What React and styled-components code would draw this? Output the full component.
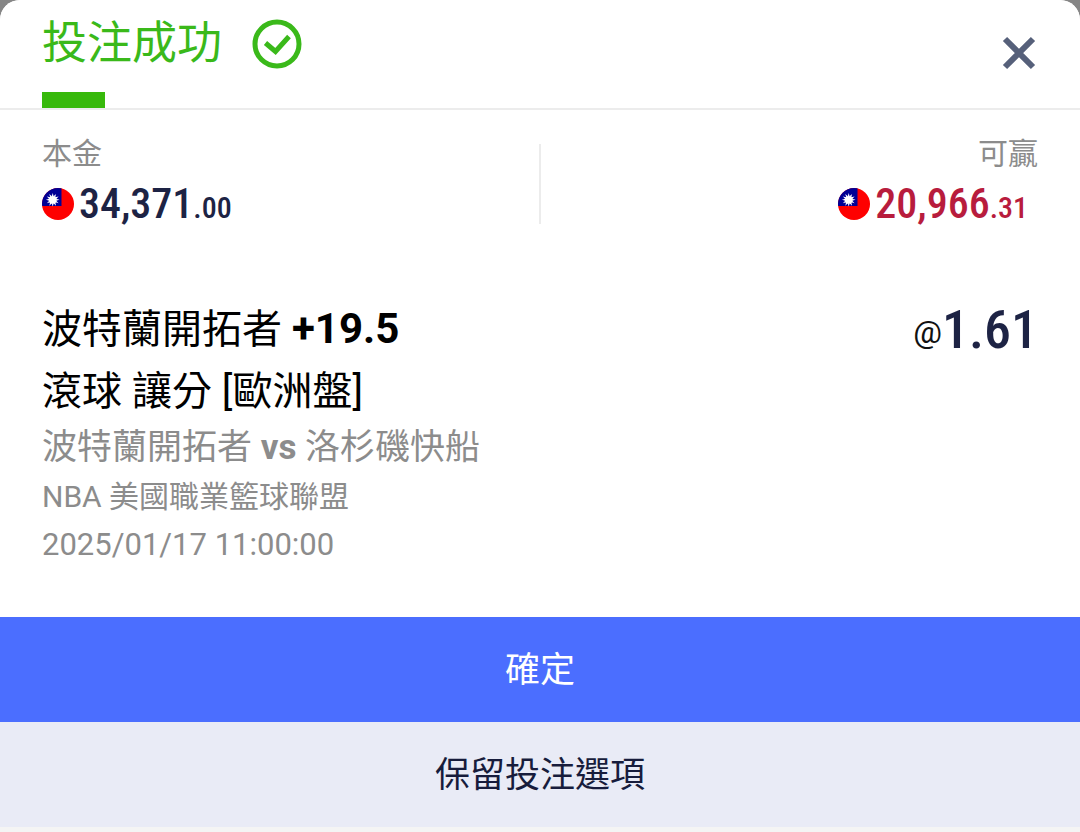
import React from 'react';
import styled, { createGlobalStyle } from 'styled-components';

const GlobalStyle = createGlobalStyle`
  * {
    box-sizing: border-box;
  }

  body {
    margin: 0;
    background: #868686;
    font-family: Roboto, 'Noto Sans CJK TC', sans-serif;
  }
`;

const Sheet = styled.main`
  display: flex;
  flex-direction: column;
  min-height: 100vh;
  overflow: hidden;
  border-radius: 20px 20px 0 0;
  background: #f4f4f4;
`;

const Header = styled.header`
  display: flex;
  justify-content: space-between;
  align-items: flex-start;
  padding: 0 42px;
  border-bottom: 2px solid #ececec;
  background: #fff;
`;

const Title = styled.h1`
  display: flex;
  align-items: center;
  gap: 30px;
  margin: 0;
  padding-bottom: 4px;
  color: #3ab91a;
  font-size: 45px;
  font-weight: 400;
  line-height: 88px;
`;

const ActiveBar = styled.div`
  width: 63px;
  height: 16px;
  background: #37b90b;
`;

const CloseButton = styled.button`
  display: flex;
  margin-top: 34px;
  padding: 0;
  border: 0;
  background: none;
  color: #56607a;
  cursor: pointer;
`;

const Content = styled.section`
  flex: 1;
  padding: 26px 42px 46px;
  background: #fff;
`;

const Summary = styled.div`
  display: flex;
  justify-content: space-between;
  margin-bottom: 62px;
`;

const SummaryItem = styled.div`
  display: flex;
  flex: 1;
  flex-direction: column;
  align-items: ${({ $end }) => ($end ? 'flex-end' : 'flex-start')};
`;

const Divider = styled.div`
  width: 2px;
  margin: 8px 0 12px;
  background: #ececec;
`;

const Label = styled.span`
  color: #8c8c8c;
  font-size: 30px;
  line-height: 36px;
`;

const Amount = styled.strong`
  display: flex;
  align-items: center;
  gap: 5px;
  padding: ${({ $win }) => ($win ? '4px 10px 0 0' : '4px 0 0')};
  color: ${({ $win }) => ($win ? '#b81c3d' : '#1d2344')};
  font-family: 'Roboto Condensed', Roboto, sans-serif;
  font-size: 42px;
  font-weight: 500;
  line-height: 56px;

  svg {
    margin-bottom: 4px;
  }
`;

const Cents = styled.span`
  font-size: 30px;
`;

const Bet = styled.div`
  display: flex;
  justify-content: space-between;
  align-items: flex-start;
`;

const Selection = styled.p`
  margin: 0;
  color: #000;
  font-size: 40px;
  line-height: 62px;

  b {
    font-size: 42px;
  }
`;

const Match = styled.p`
  margin: 0;
  color: #8c8c8c;
  font-size: 35px;
  line-height: 50px;
`;

const Meta = styled.p`
  margin: 0;
  color: #8c8c8c;
  font-size: ${({ $size }) => $size}px;
  line-height: 48px;
`;

const Odds = styled.div`
  color: #1d2344;
  font-family: 'Roboto Condensed', Roboto, sans-serif;
  font-size: 54px;
  font-weight: 500;
  line-height: 64px;
`;

const At = styled.span`
  color: #111;
  font-family: Roboto, sans-serif;
  font-size: 32px;
  font-weight: 400;
  line-height: 1;
  vertical-align: 5px;
`;

const Action = styled.button`
  height: 105px;
  padding: 0 0 6px;
  border: 0;
  background: ${({ $primary }) => ($primary ? '#4b6eff' : '#e9ebf6')};
  color: ${({ $primary }) => ($primary ? '#fff' : '#171c3c')};
  font-family: inherit;
  font-size: 35px;
  cursor: pointer;

  &:last-child {
    margin-bottom: 5px;
  }
`;

const rays = Array.from({ length: 12 }, (_, i) => i * 30);

const Flag = ({ id }) => (
  <svg width="32" height="32" viewBox="0 0 32 32" aria-hidden="true">
    <clipPath id={id}>
      <circle cx="16" cy="16" r="16" />
    </clipPath>
    <g clipPath={`url(#${id})`}>
      <rect width="32" height="32" fill="#fe0000" />
      <rect width="19.5" height="18" fill="#000095" />
      <g fill="#fff" transform="translate(10.7 11.8)">
        {rays.map(angle => (
          <path
            key={angle}
            d="M-1 -3.4L0 -6.8L1 -3.4Z"
            transform={`rotate(${angle})`}
          />
        ))}
        <circle r="3.9" />
      </g>
    </g>
  </svg>
);

const SuccessIcon = () => (
  <svg width="50" height="50" viewBox="0 0 50 50" fill="none" aria-hidden="true">
    <circle cx="25" cy="25" r="22" stroke="currentColor" strokeWidth="5" />
    <path d="M13.5 24L23.5 32.5L37 17.5" stroke="currentColor" strokeWidth="5" />
  </svg>
);

const CloseIcon = () => (
  <svg width="38" height="38" viewBox="0 0 38 38" fill="none" aria-hidden="true">
    <path
      d="M5 5L33 33M33 5L5 33"
      stroke="currentColor"
      strokeWidth="6"
    />
  </svg>
);

const App = () => (
  <>
    <GlobalStyle />
    <Sheet lang="zh-Hant">
      <Header>
        <div>
          <Title>
            投注成功
            <SuccessIcon />
          </Title>
          <ActiveBar />
        </div>
        <CloseButton type="button" aria-label="關閉">
          <CloseIcon />
        </CloseButton>
      </Header>
      <Content>
        <Summary>
          <SummaryItem>
            <Label>本金</Label>
            <Amount>
              <Flag id="stake-flag" />
              <span>
                34,371<Cents>.00</Cents>
              </span>
            </Amount>
          </SummaryItem>
          <Divider />
          <SummaryItem $end>
            <Label>可贏</Label>
            <Amount $win>
              <Flag id="win-flag" />
              <span>
                20,966<Cents>.31</Cents>
              </span>
            </Amount>
          </SummaryItem>
        </Summary>
        <Bet>
          <div>
            <Selection>
              波特蘭開拓者 <b>+19.5</b>
            </Selection>
            <Selection>滾球 讓分 [歐洲盤]</Selection>
            <Match>
              波特蘭開拓者 <b>vs</b> 洛杉磯快船
            </Match>
            <Meta $size={30}>NBA 美國職業籃球聯盟</Meta>
            <Meta $size={31}>2025/01/17 11:00:00</Meta>
          </div>
          <Odds>
            <At>@</At>1.61
          </Odds>
        </Bet>
      </Content>
      <Action type="button" $primary>
        確定
      </Action>
      <Action type="button">保留投注選項</Action>
    </Sheet>
  </>
);

export default App;
